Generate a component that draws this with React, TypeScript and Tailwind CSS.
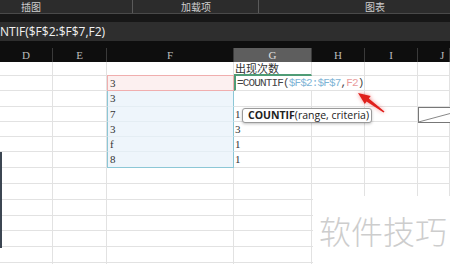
import React from 'react'

type Row = { h: number; f?: string; g?: React.ReactNode; kind?: 'crit' | 'sel' | 'selEnd' }

const cols = 'grid grid-cols-[53px_54px_127px_78px_53px_53px_1fr]'
const line = 'border-r border-b border-[#e2e2e2]'

const formula = (
  <span className="whitespace-nowrap font-['Liberation_Mono',monospace] text-[11px] tracking-[-0.85px] text-[#444]">
    =COUNTIF(<span className="text-[#7db4d6]">$F$2:$F$7</span>,<span className="text-[#e99c9c]">F2</span>)
  </span>
)

const rows: Row[] = [
  { h: 14, g: '出现次数' },
  { h: 15, f: '3', g: formula, kind: 'crit' },
  { h: 16, f: '3', kind: 'sel' },
  { h: 15, f: '7', g: '1', kind: 'sel' },
  { h: 15, f: '3', g: '3', kind: 'sel' },
  { h: 15, f: 'f', g: '1', kind: 'sel' },
  { h: 16, f: '8', g: '1', kind: 'selEnd' },
  { h: 16 },
  { h: 16 },
  { h: 16 },
  { h: 15 },
  { h: 16 },
  { h: 16 },
  { h: 16 },
]

function Sheet() {
  return (
    <div className="relative">
      {rows.map((r, i) => {
        let fCls = line
        if (r.kind === 'crit') fCls = 'border border-[#f0aeae] bg-[#fcf0f0] -mt-px'
        if (r.kind === 'sel') fCls = 'border-l border-r border-b border-l-[#8cc7d6] border-r-[#8cc7d6] border-b-[#e4edf3] bg-[#eef5fb]'
        if (r.kind === 'selEnd') fCls = 'border border-t-0 border-[#8cc7d6] bg-[#eef5fb]'
        const gCls =
          i === 0
            ? 'border-r border-b-2 border-r-[#e2e2e2] border-b-[#4f9c76]'
            : i === 1
              ? 'border-l-2 border-l-[#4f9c76] border-b border-b-[#e2e2e2]'
              : line
        return (
          <div key={i} className={cols} style={{ height: r.h }}>
            <div className={line} />
            <div className={line} />
            <div className={`${fCls} flex items-center pl-[2px] font-['Liberation_Serif',serif] text-[11px] text-[#333] leading-none`}>
              {r.f}
            </div>
            <div
              className={`${gCls} flex items-center pl-[1px] text-[11px] text-[#333] leading-none overflow-visible ${
                i === 0 ? "font-['Noto_Sans_CJK_SC',sans-serif]" : "font-['Liberation_Serif',serif]"
              }`}
            >
              {r.g}
            </div>
            <div className={line} />
            <div className={line} />
            <div className={line} />
          </div>
        )
      })}

      {/* window edge on the left */}
      <div className="absolute left-0 top-[90px] h-[96px] w-[2px] bg-[#3c4652]" />

      {/* tooltip */}
      <div className="absolute left-[242px] top-[46px] h-[15px] w-[130px] flex items-center pl-[5px] rounded-[3px] border border-[#9a9a9a] bg-white shadow-[0_1px_3px_rgba(0,0,0,0.25)] font-['Open_Sans',sans-serif] text-[10.5px] leading-none text-[#222] whitespace-nowrap">
        <b className="font-bold">COUNTIF</b>(range, criteria)
      </div>

      {/* red arrow */}
      <svg className="absolute left-[355px] top-[26px] drop-shadow-[0_0_2px_rgba(230,60,60,0.6)]" width="34" height="28" viewBox="0 0 34 28">
        <polygon points="3,5 15.7,8.1 13.8,10.6 29.5,23.4 28.5,24.6 11.6,13.6 9.8,16.1" fill="#e0201c" />
      </svg>

      {/* shape in J */}
      <svg className="absolute left-[418px] top-[45px]" width="34" height="16" viewBox="0 0 34 16">
        <rect x="0.5" y="0.5" width="40" height="15" fill="white" stroke="#777" />
        <line x1="0.5" y1="15" x2="34" y2="6" stroke="#888" />
      </svg>

      {/* watermark */}
      <div className="absolute left-[313px] top-[134px] right-0 bottom-0 bg-white pl-[6px] pt-[18px] font-['Noto_Sans_CJK_SC',sans-serif] text-[32px] font-light leading-none text-[#cdcdcd] whitespace-nowrap">
        软件技巧
      </div>
    </div>
  )
}

export default function App() {
  const heads = ['D', 'E', 'F', 'G', 'H', 'I', 'J']
  return (
    <div className="w-[450px] h-[264px] overflow-hidden bg-white">
      {/* ribbon group labels */}
      <div className="flex h-[14px] bg-[#2c2c2c] border-b border-[#4a4a4a] font-['Noto_Sans_CJK_SC',sans-serif] text-[10px] leading-[13px] text-[#cfcfcf]">
        <div className="w-[133px] border-r border-[#5a5a5a] pl-[21px]">插图</div>
        <div className="w-[126px] border-r border-[#5a5a5a] pl-[48px]">加载项</div>
        <div className="flex-1 pl-[106px]">图表</div>
      </div>
      <div className="h-[8px] bg-[#171717]" />
      {/* formula bar */}
      <div className="h-[19px] bg-[#2e2e2e] flex items-center font-['Open_Sans',sans-serif] text-[12px] text-[#f2f2f2] whitespace-nowrap">
        NTIF($F$2:$F$7,F2)
      </div>
      <div className="h-[7px] bg-[#0e0e0e]" />
      {/* column headers */}
      <div className={`${cols} h-[14px] bg-[#0e0e0e] font-['Liberation_Serif',serif] text-[11px] leading-none`}>
        {heads.map((h) => (
          <div
            key={h}
            className={`flex items-center justify-center border-r border-[#3a3a3a] ${
              h === 'G' ? 'bg-[#5e5e5e] text-[#e0e0e0]' : 'text-[#bdbdbd]'
            } ${h === 'J' ? 'justify-start pl-[22px]' : ''}`}
          >
            {h}
          </div>
        ))}
      </div>
      <Sheet />
    </div>
  )
}
